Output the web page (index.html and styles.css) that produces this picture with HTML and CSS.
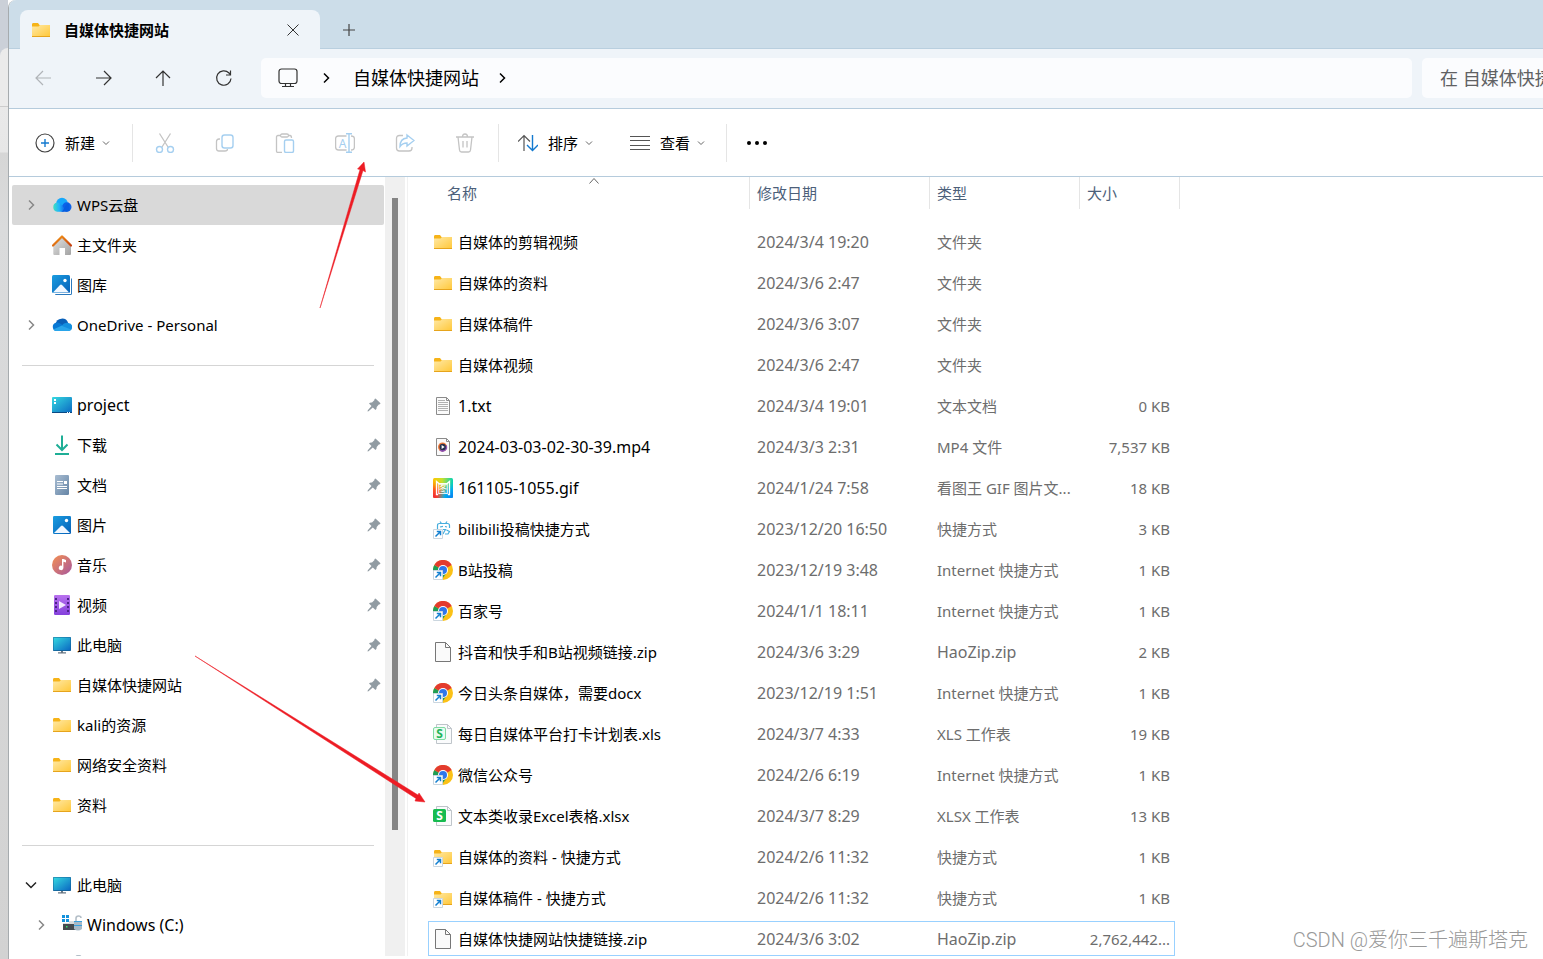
FILE: index.html
```
<!DOCTYPE html>
<html lang="zh-CN">
<head>
  <meta charset="UTF-8">
  <meta name="viewport" content="width=device-width, initial-scale=1.0">
  <title>自媒体快捷网站</title>
  <link rel="stylesheet" href="styles.css">
</head>
<body>
  <svg class="sprite" width="0" height="0" aria-hidden="true">
    <defs>
      <linearGradient id="gFolder" x1="0" y1="0" x2="1" y2="1"><stop offset="0" stop-color="#ffe9a6"/><stop offset="1" stop-color="#ffc83a"/></linearGradient>
      <linearGradient id="gBlue" x1="0" y1="0" x2="1" y2="1"><stop offset="0" stop-color="#1a9de0"/><stop offset="1" stop-color="#0660b8"/></linearGradient>
      <linearGradient id="gCyan" x1="0" y1="0" x2="1" y2="1"><stop offset="0" stop-color="#35d9e0"/><stop offset="1" stop-color="#0b68c2"/></linearGradient>
      <linearGradient id="gCloud" x1="0" y1="0" x2="1" y2="0"><stop offset="0" stop-color="#3ee0c0"/><stop offset=".5" stop-color="#20b4fb"/><stop offset="1" stop-color="#0d5fe6"/></linearGradient>
      <linearGradient id="gHome" x1="0" y1="0" x2="1" y2="1"><stop offset="0" stop-color="#e2e2e2"/><stop offset="1" stop-color="#a3a3a3"/></linearGradient>
      <linearGradient id="gRoof" x1="0" y1="0" x2="1" y2="1"><stop offset="0" stop-color="#f59a16"/><stop offset="1" stop-color="#c8400f"/></linearGradient>
      <linearGradient id="gDoc" x1="0" y1="0" x2="1" y2="1"><stop offset="0" stop-color="#a9bdd2"/><stop offset="1" stop-color="#6585a6"/></linearGradient>
      <linearGradient id="gMusic" x1="0" y1="0" x2="1" y2="1"><stop offset="0" stop-color="#f59050"/><stop offset="1" stop-color="#a6579f"/></linearGradient>
      <linearGradient id="gVideo" x1="0" y1="0" x2="0" y2="1"><stop offset="0" stop-color="#b871ee"/><stop offset="1" stop-color="#8440dc"/></linearGradient>
      <linearGradient id="gRain" x1="0" y1="0" x2="1" y2="0"><stop offset="0" stop-color="#ffc400"/><stop offset=".45" stop-color="#c9e02a"/><stop offset="1" stop-color="#00d3b8"/></linearGradient>
      <radialGradient id="gRainRed" cx="0" cy="1" r=".9"><stop offset="0" stop-color="#f0223c"/><stop offset=".5" stop-color="#ff5a1e"/><stop offset="1" stop-color="#ff8a00" stop-opacity="0"/></radialGradient>
      <radialGradient id="gRainBlue" cx="1" cy="1" r=".8"><stop offset="0" stop-color="#0a7cf0"/><stop offset=".5" stop-color="#00a8f0"/><stop offset="1" stop-color="#00b9ea" stop-opacity="0"/></radialGradient>
    </defs>
    <symbol id="folder" viewBox="0 0 20 20"><path d="M1 4.500q0-1.500 1-1.500h5l1.500 2H19v3H1z" fill="#f6b318"/><path d="M1 6.500h6.500L9 5h10v11.500H1z" fill="url(#gFolder)"/><path d="M1 16h18v1H1z" fill="#e6a41c"/></symbol>
    <symbol id="wps" viewBox="0 0 20 20"><circle cx="10" cy="8.500" r="5.800" fill="#16a9fb"/><circle cx="14.800" cy="12" r="4.700" fill="#0c62e8"/><path d="M5.200 7.600a4.600 4.600 0 0 0 0 9.100h6.300L13 14 9 9.500a5 5 0 0 0-3.800-1.900z" fill="url(#gCloud)"/><path d="M9 16.700c3.500-.2 2.800-6.700 7.500-8.700l1 8-2.700.7z" fill="#075de0"/></symbol>
    <symbol id="home" viewBox="0 0 20 20"><path d="M2 8.500 10 1.800l9 7.500V19a1 1 0 0 1-1 1h-5v-7H7.500v7H2.300a1 1 0 0 1-1-1V9z" fill="url(#gHome)"/><path d="M1 10.500 10 1.500l9 9" fill="none" stroke="url(#gRoof)" stroke-width="2.200" stroke-linecap="round" stroke-linejoin="round"/></symbol>
    <symbol id="gallery" viewBox="0 0 20 20"><path d="M3 3h15.500q1.500 0 1.500 1.500V18.500q0 1.500-1.500 1.500H4q-1 0-1-1z" fill="#2a79bd"/><path d="M1 1h18v18H1z" fill="#fff"/><rect width="18" height="18" rx="1.500" fill="url(#gBlue)"/><path d="M1 17.500 8 10q1-1 2 0l7 7.500z" fill="#f0f7ff"/><circle cx="13" cy="5.500" r="1.700" fill="#fff"/></symbol>
    <symbol id="onedrive" viewBox="0 0 20 20"><path d="M3.500 9a6.600 6.600 0 0 1 12.700-1L10 13z" fill="#0a60b8"/><path d="M4.500 16A4.300 4.300 0 0 1 3.600 7.700q3-.8 5.700 1.500L14 13z" fill="#0878d4"/><path d="M9 11.300q3.500-4.200 7.300-3.300A4 4 0 0 1 16 16H8z" fill="#148fdf"/><path d="M1.200 14.500 9.500 10.800l9.500 3.800A3 3 0 0 1 16 16H4.500a4 4 0 0 1-3.300-1.500z" fill="#29a5ea"/></symbol>
    <symbol id="desktop" viewBox="0 0 20 20"><rect y="2" width="20" height="16" rx="1" fill="url(#gCyan)"/><path d="M2 4h2v2H2zm0 3h2v2H2z" fill="#fff"/><path d="M0 17h20v1H0z" fill="#0a4983"/><path d="M15 17h1v1h-1zm2 0h1v1h-1z" fill="#fff"/></symbol>
    <symbol id="download" viewBox="0 0 20 20"><path d="M10 .5v14M4.500 9.500 10 15l5.500-5.500M3 19h14" fill="none" stroke="#1eae96" stroke-width="2"/></symbol>
    <symbol id="doc" viewBox="0 0 20 20"><rect x="3" width="14" height="20" rx="1.200" fill="url(#gDoc)"/><path d="M5 6.500h6M5 9h6M5 11.500h10M5 13.500h10" stroke="#fff"/><path d="M12 6h3v3h-3z" fill="#fff"/></symbol>
    <symbol id="picture" viewBox="0 0 20 20"><rect x="1" y="1" width="18" height="18" rx="1.300" fill="url(#gBlue)"/><path d="M2 18 9 11q1-1 2 0l7 7z" fill="#f0f7ff"/><circle cx="14.500" cy="5.500" r="1.700" fill="#fff"/></symbol>
    <symbol id="music" viewBox="0 0 20 20"><circle cx="10" cy="10" r="10" fill="url(#gMusic)"/><path d="M10 4h1.500l2.500 1v2.600l-2.600-.9V13a2.300 2.300 0 1 1-1.400-2.300z" fill="#fff"/></symbol>
    <symbol id="video" viewBox="0 0 20 20"><rect x="2" width="16" height="20" rx="1.200" fill="url(#gVideo)"/><path d="M4 3v15M16 3v15" stroke="#4c2388" stroke-width="2" stroke-dasharray="2 2"/><path d="m7 6 7 4-7 4z" fill="#f3e9ff"/></symbol>
    <symbol id="pc" viewBox="0 0 20 20"><rect x="1" y="2" width="18" height="14" rx=".8" fill="#145f96"/><rect x="1.500" y="2.500" width="17" height="12.700" fill="url(#gCyan)"/><path d="M9 16h2v1.200h3v1.200H6v-1.200h3z" fill="#697784"/></symbol>
    <symbol id="drive" viewBox="0 0 20 20"><path d="M0 0h3v3H0zm4 0h3v3H4zM0 4h3v3H0zm4 0h3v3H4z" fill="#1492dc"/><path d="M7 6h6v3H1V8h6z" fill="#d9dcde"/><rect x="1" y="9" width="15" height="6" fill="#454b50"/><path d="M4 11h1.500v1.500H4z" fill="#35e06d"/><path d="M14 6V3.500Q14 1 16.500 1T19 3" fill="none" stroke="#b4bfc8" stroke-width="1.600"/><path d="M12 6h8v8q-4 3-8 0z" fill="#a9bac7"/><path d="M12 6.500h8M12 10.500h8" stroke="#38a1df"/></symbol>
    <symbol id="drive-lock" viewBox="0 0 20 20"><path d="M14 6V3Q14 .5 16.500.5T19 3" fill="none" stroke="#b4bfc8" stroke-width="1.600"/></symbol>
    <symbol id="txt" viewBox="0 0 20 20"><path d="M3.500 1.500h10l3 3v14h-13z" fill="#fafafa" stroke="#8b8b8b"/><path d="M13.500 1.500v3h3" fill="none" stroke="#8b8b8b"/><path d="M5 4.500h7M5 6.500h10M5 8.500h10M5 10.500h10M5 12.500h10M5 14.500h10" stroke="#b0b0b0"/></symbol>
    <symbol id="mp4" viewBox="0 0 20 20"><path d="M3.500 1.500h10l3 3v14h-13z" fill="#fafafa" stroke="#8b8b8b"/><path d="M13.500 1.500v3h3" fill="none" stroke="#8b8b8b"/><circle cx="9.500" cy="10" r="4.500" fill="#ef7838"/><path d="M13.500 8a4.500 4.500 0 0 1-7 5.500z" fill="#8d50b5"/><circle cx="9.700" cy="10" r="3.200" fill="#26304c"/><path d="m8.600 8 3 2-3 2z" fill="#fff"/></symbol>
    <symbol id="shortcut" viewBox="0 0 20 20"><path d="M.5 10.500h9v9h-9z" fill="#fff" stroke="#cbd6df"/><path d="M2.500 17.500 7.500 12.500M3.800 12.500h3.700v3.800" fill="none" stroke="#127fd0" stroke-width="1.500"/></symbol>
    <symbol id="bili" viewBox="0 0 20 20"><path d="m7 2.500 1.500 2M14 2.500l-1.500 2M4.500 10V6.500q0-2 2-2h8q2 0 2 2V9M7 8l3-.7M12 7.500l2 .5M10 10.500h2.500L11 13l-1 2M13.500 11l3 1.500-1.500 2.500h-3" fill="none" stroke="#45aede" stroke-width="1.200"/><use href="#shortcut"/></symbol>
    <symbol id="chrome" viewBox="0 0 20 20"><circle cx="10" cy="10" r="10" fill="#fbc116"/><path d="M10 10 1.300 5a10 10 0 0 0 7.200 14.900L14 12z" fill="#1f9d55"/><path d="M10 10 1.300 5a10 10 0 0 1 17.400 0z" fill="#e33b2e"/><circle cx="10" cy="10" r="5" fill="#fff"/><circle cx="10" cy="10" r="4" fill="#2f77ea"/><use href="#shortcut"/></symbol>
    <symbol id="blank" viewBox="0 0 20 20"><path d="M2.500.5h10l5 5v14h-15z" fill="#fafafa" stroke="#777"/><path d="M12.500.5v5h5" fill="none" stroke="#777"/></symbol>
    <symbol id="sheet" viewBox="0 0 20 20"><path d="M3.500.5h11l4 4v15h-15z" fill="#fafbfc" stroke="#bfc5ca"/><path d="M14.500.5v4h4" fill="none" stroke="#bfc5ca"/></symbol>
    <symbol id="folder-link" viewBox="0 0 20 20"><use href="#folder"/><use href="#shortcut"/></symbol>
    <symbol id="pin" viewBox="0 0 14 14"><path d="M8.500.5 13.500 5.300q-.3 1.200-1.700 1.300L9.700 9q.2 2-1.200 3L5.800 9.600 1.500 13.300.5 13.500l.3-1.200 3.700-4.200L2 5.500Q3 4.200 5 4.500l2.300-2.200q0-1.500 1.200-1.800z" fill="#919ca3"/></symbol>
    <symbol id="chev-right" viewBox="0 0 20 20"><path d="m8 5.500 4.500 4.500L8 14.500" fill="none" stroke="currentColor" stroke-width="1.500"/></symbol>
    <symbol id="chev-down" viewBox="0 0 20 20"><path d="m5 7.500 5 5 5-5" fill="none" stroke="currentColor" stroke-width="1.500"/></symbol>
    <symbol id="chev-small" viewBox="0 0 8 8"><path d="m1 2.500 3 3 3-3" fill="none" stroke="#666"/></symbol>
  </svg>

  <div class="desktop-edge"><div class="back-window"></div></div>

  <div class="explorer">
    <header class="tab-strip">
      <div class="tab">
        <svg class="icon"><use href="#folder"/></svg>
        <span class="tab-title">自媒体快捷网站</span>
        <button class="tab-close" aria-label="关闭"><svg width="12" height="12"><path d="m.5.500 11 11m0-11-11 11" fill="none" stroke="#333"/></svg></button>
      </div>
      <button class="tab-new" aria-label="新建标签页"><svg width="12" height="12"><path d="M6 0v12M0 6h12" fill="none" stroke="#444" stroke-width="1.200"/></svg></button>
    </header>

    <nav class="nav-bar">
      <div class="nav-buttons">
        <button class="off" aria-label="后退"><svg class="icon" viewBox="0 0 20 20"><path d="M18 10H3m7-7-7 7 7 7"/></svg></button>
        <button aria-label="前进"><svg class="icon" viewBox="0 0 20 20"><path d="M3 10h15m-7-7 7 7-7 7"/></svg></button>
        <button aria-label="向上"><svg class="icon" viewBox="0 0 20 20"><path d="M10 18V3m-7 7 7-7 7 7"/></svg></button>
        <button aria-label="刷新"><svg class="icon" viewBox="0 0 20 20"><path d="M18 10.500a7.200 7.200 0 1 1-2-5.500l1.500 1.500M17.500 2.500v4.500H13"/></svg></button>
      </div>
      <div class="address">
        <svg class="icon monitor" viewBox="0 0 20 20"><rect x="1" y="1" width="18" height="14.500" rx="2.500"/><path d="M7.500 15.500v2.500m5-2.500v2.500M4 18.500h12"/></svg>
        <svg class="icon crumb-sep"><use href="#chev-right"/></svg>
        <a href="#" class="crumb">自媒体快捷网站</a>
        <svg class="icon crumb-sep"><use href="#chev-right"/></svg>
      </div>
      <input class="search" type="text" aria-label="搜索" placeholder="在 自媒体快捷网站 中搜索">
    </nav>

    <div class="toolbar">
      <button class="tool">
        <svg class="icon" viewBox="0 0 20 20"><circle cx="10" cy="10" r="9" fill="none" stroke="#444" stroke-width="1.200"/><path d="M10 6v8m-4-4h8" stroke="#1379cf" stroke-width="1.400"/></svg>
        新建
        <svg class="chev"><use href="#chev-small"/></svg>
      </button>
      <div class="tool-group">
        <button aria-label="剪切" disabled><svg class="icon" viewBox="0 0 20 20"><path class="g" d="m4.500.5 8.500 13.500M15.500.5 7 14"/><circle class="b" cx="4.500" cy="16.500" r="3"/><circle class="b" cx="15.500" cy="16.500" r="3"/></svg></button>
        <button aria-label="复制" disabled><svg class="icon" viewBox="0 0 20 20"><path class="g" d="M5 6H4Q1.500 6 1.500 8.500v7Q1.500 18 4 18h6q2.500 0 2.500-2"/><rect class="b" x="7" y="2" width="11" height="13" rx="2.500"/></svg></button>
        <button aria-label="粘贴" disabled><svg class="icon" viewBox="0 0 20 20"><path class="g" d="M7 19.500H3q-1.500 0-1.500-1.500V4Q1.500 2.500 3 2.500h2m9 0h1Q16.500 2.500 16.500 5"/><rect class="g" x="5.500" y="1" width="8" height="3" rx="1.500"/><rect class="b" x="9.500" y="7" width="9" height="12.500" rx="1.500"/></svg></button>
        <button aria-label="重命名" disabled><svg class="icon" viewBox="0 0 20 20"><path class="g" d="M11.500 3H3.500Q.6 3 .6 6v8q0 3 3 3h8M16 3q3.400 0 3.400 3v8q0 3-3.400 3"/><path class="b" d="M14 1v18M11 .7h6M11 19.300h6"/><text x="7.500" y="14.500" class="rename-letter">A</text></svg></button>
        <button aria-label="共享" disabled><svg class="icon" viewBox="0 0 20 20"><path class="g" d="M8 2.500H4.500q-3 0-3 3V15q0 3 3 3H14q3 0 3-3v-1"/><path class="b" d="M12 2 19 7.500 12 13v-3q-4.500 0-7 3.500 0-8 7-8.500z"/></svg></button>
        <button aria-label="删除" disabled><svg class="icon" viewBox="0 0 20 20"><path class="g" d="M1 4h18M7.500 4Q7.500 1 10 1t2.500 3M3 4l1.500 13q.2 2 2 2h7q1.800 0 2-2L17 4M8 8v6.500M12 8v6.500"/></svg></button>
      </div>
      <div class="tool-group wide">
        <button class="tool">
          <svg class="icon" viewBox="0 0 20 20"><path d="M6 18V3M0 8.500l6-6 6 6" fill="none" stroke="#555" stroke-width="1.200"/><path d="M14.500 2v15.500M9 12l5.500 5.500L20 12" fill="none" stroke="#1379cf" stroke-width="1.400"/></svg>
          排序
          <svg class="chev"><use href="#chev-small"/></svg>
        </button>
        <button class="tool">
          <svg class="icon" viewBox="0 0 20 20"><path d="M0 3.500h20M0 7.500h20M0 12.500h20M0 16.500h20" stroke="#555"/></svg>
          查看
          <svg class="chev"><use href="#chev-small"/></svg>
        </button>
      </div>
      <button class="more" aria-label="更多"><svg class="icon" viewBox="0 0 20 20"><circle cx="2" cy="10" r="2"/><circle cx="10" cy="10" r="2"/><circle cx="18" cy="10" r="2"/></svg></button>
    </div>

    <div class="content">
      <aside class="sidebar">
        <ul class="tree">
          <li><a href="#" class="node active"><svg class="icon arrow"><use href="#chev-right"/></svg><svg class="icon"><use href="#wps"/></svg><span>WPS云盘</span></a></li>
          <li><a href="#" class="node"><i class="arrow"></i><svg class="icon"><use href="#home"/></svg><span>主文件夹</span></a></li>
          <li><a href="#" class="node"><i class="arrow"></i><svg class="icon"><use href="#gallery"/></svg><span>图库</span></a></li>
          <li><a href="#" class="node"><svg class="icon arrow"><use href="#chev-right"/></svg><svg class="icon"><use href="#onedrive"/></svg><span>OneDrive - Personal</span></a></li>
          <li class="divider"></li>
          <li><a href="#" class="node"><i class="arrow"></i><svg class="icon"><use href="#desktop"/></svg><span class="latin">project</span><svg class="pin"><use href="#pin"/></svg></a></li>
          <li><a href="#" class="node"><i class="arrow"></i><svg class="icon"><use href="#download"/></svg><span>下载</span><svg class="pin"><use href="#pin"/></svg></a></li>
          <li><a href="#" class="node"><i class="arrow"></i><svg class="icon"><use href="#doc"/></svg><span>文档</span><svg class="pin"><use href="#pin"/></svg></a></li>
          <li><a href="#" class="node"><i class="arrow"></i><svg class="icon"><use href="#picture"/></svg><span>图片</span><svg class="pin"><use href="#pin"/></svg></a></li>
          <li><a href="#" class="node"><i class="arrow"></i><svg class="icon"><use href="#music"/></svg><span>音乐</span><svg class="pin"><use href="#pin"/></svg></a></li>
          <li><a href="#" class="node"><i class="arrow"></i><svg class="icon"><use href="#video"/></svg><span>视频</span><svg class="pin"><use href="#pin"/></svg></a></li>
          <li><a href="#" class="node"><i class="arrow"></i><svg class="icon"><use href="#pc"/></svg><span>此电脑</span><svg class="pin"><use href="#pin"/></svg></a></li>
          <li><a href="#" class="node"><i class="arrow"></i><svg class="icon"><use href="#folder"/></svg><span>自媒体快捷网站</span><svg class="pin"><use href="#pin"/></svg></a></li>
          <li><a href="#" class="node"><i class="arrow"></i><svg class="icon"><use href="#folder"/></svg><span>kali的资源</span></a></li>
          <li><a href="#" class="node"><i class="arrow"></i><svg class="icon"><use href="#folder"/></svg><span>网络安全资料</span></a></li>
          <li><a href="#" class="node"><i class="arrow"></i><svg class="icon"><use href="#folder"/></svg><span>资料</span></a></li>
          <li class="divider"></li>
          <li><a href="#" class="node"><svg class="icon arrow open"><use href="#chev-down"/></svg><svg class="icon"><use href="#pc"/></svg><span>此电脑</span></a></li>
          <li><a href="#" class="node child"><svg class="icon arrow"><use href="#chev-right"/></svg><svg class="icon"><use href="#drive"/></svg><span class="latin">Windows (C:)</span></a></li>
          <li><a href="#" class="node child"><i class="arrow"></i><svg class="icon"><use href="#drive-lock"/></svg></a></li>
        </ul>
        <div class="scrollbar"><div class="thumb"></div></div>
      </aside>

      <main class="files">
        <table>
          <colgroup><col class="col-name"><col class="col-date"><col class="col-type"><col class="col-size"></colgroup>
          <thead>
            <tr>
              <th>名称<svg class="sort" width="10" height="6"><path d="m.5 5.500 4.500-5 4.500 5" fill="none" stroke="#666"/></svg></th>
              <th>修改日期</th><th>类型</th><th>大小</th>
            </tr>
          </thead>
          <tbody>
            <tr><td><svg class="icon"><use href="#folder"/></svg>自媒体的剪辑视频</td><td>2024/3/4 19:20</td><td>文件夹</td><td></td></tr>
            <tr><td><svg class="icon"><use href="#folder"/></svg>自媒体的资料</td><td>2024/3/6 2:47</td><td>文件夹</td><td></td></tr>
            <tr><td><svg class="icon"><use href="#folder"/></svg>自媒体稿件</td><td>2024/3/6 3:07</td><td>文件夹</td><td></td></tr>
            <tr><td><svg class="icon"><use href="#folder"/></svg>自媒体视频</td><td>2024/3/6 2:47</td><td>文件夹</td><td></td></tr>
            <tr><td class="latin"><svg class="icon"><use href="#txt"/></svg>1.txt</td><td>2024/3/4 19:01</td><td>文本文档</td><td>0 KB</td></tr>
            <tr><td class="latin"><svg class="icon"><use href="#mp4"/></svg>2024-03-03-02-30-39.mp4</td><td>2024/3/3 2:31</td><td>MP4 文件</td><td>7,537 KB</td></tr>
            <tr><td class="latin"><svg class="icon" viewBox="0 0 20 20"><rect width="20" height="20" rx="1.500" fill="url(#gRain)"/><rect width="20" height="20" rx="1.500" fill="url(#gRainRed)"/><rect width="20" height="20" rx="1.500" fill="url(#gRainBlue)"/><path d="M5 16.500H3.500V3.500l3 2.500h7l3-2.500v13H15" fill="none" stroke="#fff" stroke-width="1.300"/><text x="10" y="15" class="viewer-letter">图</text></svg>161105-1055.gif</td><td>2024/1/24 7:58</td><td>看图王 GIF 图片文...</td><td>18 KB</td></tr>
            <tr><td><svg class="icon"><use href="#bili"/></svg>bilibili投稿快捷方式</td><td>2023/12/20 16:50</td><td>快捷方式</td><td>3 KB</td></tr>
            <tr><td><svg class="icon"><use href="#chrome"/></svg>B站投稿</td><td>2023/12/19 3:48</td><td>Internet 快捷方式</td><td>1 KB</td></tr>
            <tr><td><svg class="icon"><use href="#chrome"/></svg>百家号</td><td>2024/1/1 18:11</td><td>Internet 快捷方式</td><td>1 KB</td></tr>
            <tr><td><svg class="icon"><use href="#blank"/></svg>抖音和快手和B站视频链接.zip</td><td>2024/3/6 3:29</td><td class="latin">HaoZip.zip</td><td>2 KB</td></tr>
            <tr><td><svg class="icon"><use href="#chrome"/></svg>今日头条自媒体，需要docx</td><td>2023/12/19 1:51</td><td>Internet 快捷方式</td><td>1 KB</td></tr>
            <tr><td><svg class="icon" viewBox="0 0 20 20"><use href="#sheet"/><rect x=".5" y="3.500" width="12" height="12" rx="1.500" fill="#e9fbf0" stroke="#7fdba3"/><text x="6.500" y="14" class="sheet-letter" fill="#22b45a">S</text></svg>每日自媒体平台打卡计划表.xls</td><td>2024/3/7 4:33</td><td>XLS 工作表</td><td>19 KB</td></tr>
            <tr><td><svg class="icon"><use href="#chrome"/></svg>微信公众号</td><td>2024/2/6 6:19</td><td>Internet 快捷方式</td><td>1 KB</td></tr>
            <tr><td><svg class="icon" viewBox="0 0 20 20"><use href="#sheet"/><rect y="3" width="13" height="13" rx="1.500" fill="#17bb50"/><text x="6.500" y="14" class="sheet-letter" fill="#fff">S</text></svg>文本类收录Excel表格.xlsx</td><td>2024/3/7 8:29</td><td>XLSX 工作表</td><td>13 KB</td></tr>
            <tr><td><svg class="icon"><use href="#folder-link"/></svg>自媒体的资料 - 快捷方式</td><td>2024/2/6 11:32</td><td>快捷方式</td><td>1 KB</td></tr>
            <tr><td><svg class="icon"><use href="#folder-link"/></svg>自媒体稿件 - 快捷方式</td><td>2024/2/6 11:32</td><td>快捷方式</td><td>1 KB</td></tr>
            <tr class="focused"><td><svg class="icon"><use href="#blank"/></svg>自媒体快捷网站快捷链接.zip</td><td>2024/3/6 3:02</td><td class="latin">HaoZip.zip</td><td>2,762,442...</td></tr>
          </tbody>
        </table>
      </main>
    </div>
  </div>

  <!-- red pointer arrows drawn over the window -->
  <svg class="pointers" width="440" height="820" aria-hidden="true">
    <path d="M320 308 360 169.500 357.500 169 364 162 365.500 172 363 170.500z" fill="#ed1c24" stroke="#ed1c24" stroke-width=".5"/>
    <path d="M195 656 418 795 419 793 425 802 415 801 416 798.500z" fill="#ed1c24" stroke="#ed1c24" stroke-width=".5"/>
  </svg>
  <div class="watermark">CSDN @爱你三千遍斯塔克</div>
</body>
</html>
```

FILE: styles.css
```
* {
  box-sizing: border-box;
}
body {
  margin: 0;
  height: 100vh;
  display: flex;
  overflow: hidden;
  background: #fff;
  color: #000;
  font-family: "Noto Sans", "Noto Sans CJK SC", sans-serif;
  font-size: 15px;
  line-height: 20px;
}
button {
  display: flex;
  align-items: center;
  justify-content: center;
  padding: 0;
  border: none;
  background: none;
  color: inherit;
  font: inherit;
}
a {
  color: inherit;
  text-decoration: none;
}
.sprite {
  position: absolute;
}
.icon {
  width: 20px;
  height: 20px;
  flex: none;
}
.latin {
  font-size: 16px;
}

/* strip of the desktop left of the window */
.desktop-edge {
  width: 8px;
  flex: none;
  padding-top: 48px;
  background: #cbd0d8;
}
.back-window {
  height: 100%;
  border-top-left-radius: 8px;
  background: linear-gradient(#ebebeb 58px, #ccc 58px, #ccc 59px, #e9e9e9 59px, #e7e7e7 104px, #d6d6d6 105px, #dadbdc 180px, #d2d2d2);
}

.explorer {
  flex: 1;
  min-width: 0;
  display: flex;
  flex-direction: column;
  border-left: 1px solid #a6abae;
  border-top-left-radius: 8px;
  background: #fff;
  overflow: hidden;
}

/* tabs */
.tab-strip {
  display: flex;
  height: 49px;
  flex: none;
  padding: 10px 0 0 11px;
  background: #ccdde9;
  border-bottom: 1px solid #b9cfdf;
}
.tab {
  display: flex;
  align-items: center;
  width: 300px;
  height: 39px;
  padding: 0 21px 0 11px;
  border-radius: 8px 8px 0 0;
  background: #eff4f9;
}
.tab-title {
  flex: 1;
  margin-left: 13px;
  font-weight: bold;
}
.tab-new {
  width: 58px;
  height: 40px;
}

/* navigation */
.nav-bar {
  display: flex;
  height: 60px;
  flex: none;
  padding: 9px 0 10px 4px;
  background: #eff4f9;
  border-bottom: 1px solid #b5cbdc;
}
.nav-buttons {
  display: flex;
  width: 248px;
  flex: none;
}
.nav-buttons button {
  width: 60px;
  height: 40px;
}
.nav-buttons path,
.monitor {
  fill: none;
  stroke: #333;
  stroke-width: 1.2;
}
.nav-buttons .off path {
  stroke: #b0b4b8;
}
.address {
  display: flex;
  align-items: center;
  flex: 1;
  padding-left: 17px;
  border-radius: 5px;
  background: #fbfcfe;
}
.crumb-sep {
  margin: 0 17px 0 18px;
}
.crumb {
  font-size: 18px;
}
.crumb + .crumb-sep {
  margin-left: 13px;
}
.search {
  width: 121px;
  flex: none;
  margin-left: 10px;
  padding: 0 0 0 18px;
  border: none;
  border-radius: 5px 0 0 5px;
  background: #fbfcfe;
  font-family: inherit;
  font-size: 18px;
}
.search::placeholder {
  color: #5f6163;
}

/* command bar */
.toolbar {
  display: flex;
  align-items: center;
  height: 68px;
  flex: none;
  padding-left: 26px;
  border-bottom: 1px solid #b5cbdc;
}
.tool {
  gap: 10px;
}
.tool .chev {
  width: 8px;
  height: 8px;
  margin-left: -3px;
}
.tool-group {
  display: flex;
  align-items: center;
  height: 38px;
  margin-left: 22px;
  padding: 0 3px 0 2px;
  border-left: 1px solid #e5e5e5;
  border-right: 1px solid #e5e5e5;
}
.tool-group button {
  width: 60px;
}
.tool-group.wide {
  gap: 37px;
  margin-left: 0;
  padding: 0 21px 0 19px;
  border-left: none;
}
.tool-group.wide .tool {
  width: auto;
}
.g {
  fill: none;
  stroke: #c4c4c4;
  stroke-width: 1.3;
}
.b {
  fill: #fff;
  stroke: #a5cff0;
  stroke-width: 1.4;
}
.rename-letter {
  fill: #a5cff0;
  font-size: 12px;
  text-anchor: middle;
}
.more {
  width: 60px;
}

/* sidebar */
.content {
  flex: 1;
  min-height: 0;
  display: flex;
  margin-bottom: 3px;
  overflow: hidden;
}
.sidebar {
  display: flex;
  width: 399px;
  flex: none;
  border-right: 1px solid #f1f1f1;
}
.tree {
  flex: 1;
  height: 100%;
  margin: 0;
  padding: 8px 1px 0 3px;
  list-style: none;
}
.node {
  display: flex;
  align-items: center;
  height: 40px;
  padding: 0 3px 0 9px;
  border-radius: 2px;
}
.node.active {
  background: #d9d9d9;
}
.node.child {
  padding-left: 19px;
}
.arrow {
  width: 20px;
  margin-right: 11px;
  color: #888;
}
.arrow.open {
  color: #222;
}
.node span {
  flex: 1;
  margin-left: 5px;
}
.pin {
  width: 14px;
  height: 14px;
}
.divider {
  height: 40px;
  margin: 0 10px;
  background: linear-gradient(#d5d5d5, #d5d5d5) center / 100% 1px no-repeat;
}
.scrollbar {
  width: 20px;
  height: 100%;
  margin-right: 2px;
  padding: 21px 7px 0;
  background: #f0f0f0;
}
.thumb {
  height: 83.4%;
  background: #858585;
}

/* file list */
.files {
  flex: 1;
  min-width: 0;
  padding-left: 20px;
}
table {
  width: 752px;
  table-layout: fixed;
  border-collapse: collapse;
}
.col-name {
  width: 322px;
}
.col-date {
  width: 180px;
}
.col-type {
  width: 150px;
}
.col-size {
  width: 100px;
}
th {
  height: 44px;
  padding: 0 0 0 7px;
  vertical-align: top;
  text-align: left;
  font-weight: normal;
  line-height: 32px;
  color: #4c607a;
  background: linear-gradient(#e5e5e5, #e5e5e5) right top / 1px 32px no-repeat;
}
th:first-child {
  position: relative;
  padding-left: 19px;
}
.sort {
  position: absolute;
  top: 1px;
  left: 50%;
}
td {
  height: 41px;
  padding: 0 0 0 7px;
  color: #6d6d6d;
  white-space: nowrap;
}
td:first-child {
  padding-left: 5px;
  color: #000;
}
td:nth-child(2) {
  font-size: 16px;
}
td:last-child {
  padding: 0 10px 0 0;
  text-align: right;
}
td .icon {
  margin-right: 5px;
  vertical-align: -4px;
}
.sheet-letter {
  font-size: 12px;
  font-weight: bold;
  text-anchor: middle;
}
.viewer-letter {
  font-size: 11px;
  text-anchor: middle;
  fill: #fff;
}
.focused {
  position: relative;
}
.focused::after {
  content: "";
  position: absolute;
  inset: 3px 5px 3px 0;
  border: 1px solid #99d1ff;
}

.pointers {
  position: absolute;
  top: 0;
  left: 0;
  pointer-events: none;
}
.watermark {
  position: absolute;
  right: 15px;
  bottom: 6px;
  color: #999;
  font-family: Roboto, "Noto Sans CJK SC", sans-serif;
  font-size: 20px;
  font-weight: 300;
  line-height: 26px;
}
```
